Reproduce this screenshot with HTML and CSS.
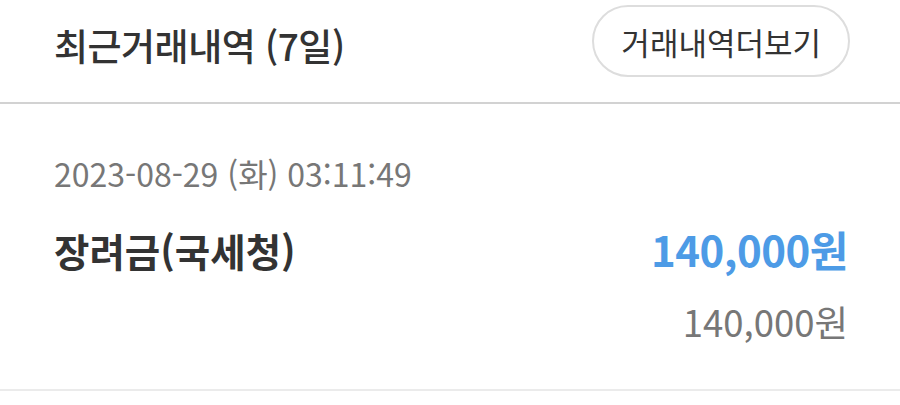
FILE: index.html
```html
<!DOCTYPE html>
<html lang="ko">
<head>
<meta charset="utf-8">
<link rel="stylesheet" href="styles.css">
</head>
<body>
<section class="recent">
  <header class="head">
    <h2 class="title">최근거래내역 (7일)</h2>
    <button class="more">거래내역더보기</button>
  </header>
  <div class="item">
    <div class="date">2023-08-29 (화) 03:11:49</div>
    <div class="row">
      <div class="name">장려금(국세청)</div>
      <div class="amount">140,000원</div>
    </div>
    <div class="balance">140,000원</div>
  </div>
</section>
</body>
</html>
```
FILE: styles.css
```css
html, body {
  margin: 0;
  padding: 0;
  background: #fff;
}
body {
  font-family: "Noto Sans CJK KR", "Noto Sans", sans-serif;
  color: #333;
}
.recent {
  width: 900px;
}
.head {
  display: flex;
  align-items: center;
  justify-content: space-between;
  height: 104px;
  padding: 0 50px 0 54px;
  box-sizing: border-box;
  border-bottom: 2px solid #d2d2d2;
}
.title {
  margin: -12px 0 0 0;
  font-size: 37px;
  font-weight: 500;
  color: #333;
  letter-spacing: -0.5px;
}
.more {
  margin-top: -20px;
  height: 72px;
  padding: 0 27px;
  border: 2px solid #ddd;
  border-radius: 36px;
  background: #fff;
  font-family: inherit;
  font-size: 31px;
  color: #333;
}
.item {
  padding: 44px 52px 41px 54px;
  border-bottom: 2px solid #ebebeb;
}
.date {
  font-size: 32px;
  color: #777;
  line-height: 50px;
}
.row {
  display: flex;
  justify-content: space-between;
  align-items: baseline;
  margin-top: 20px;
}
.name {
  font-size: 38.5px;
  font-weight: 700;
  color: #333;
}
.amount {
  font-size: 42px;
  font-weight: 700;
  color: #4d9be6;
  letter-spacing: -0.5px;
}
.balance {
  text-align: right;
  font-size: 36.5px;
  color: #777;
  margin-top: 16px;
}
```
